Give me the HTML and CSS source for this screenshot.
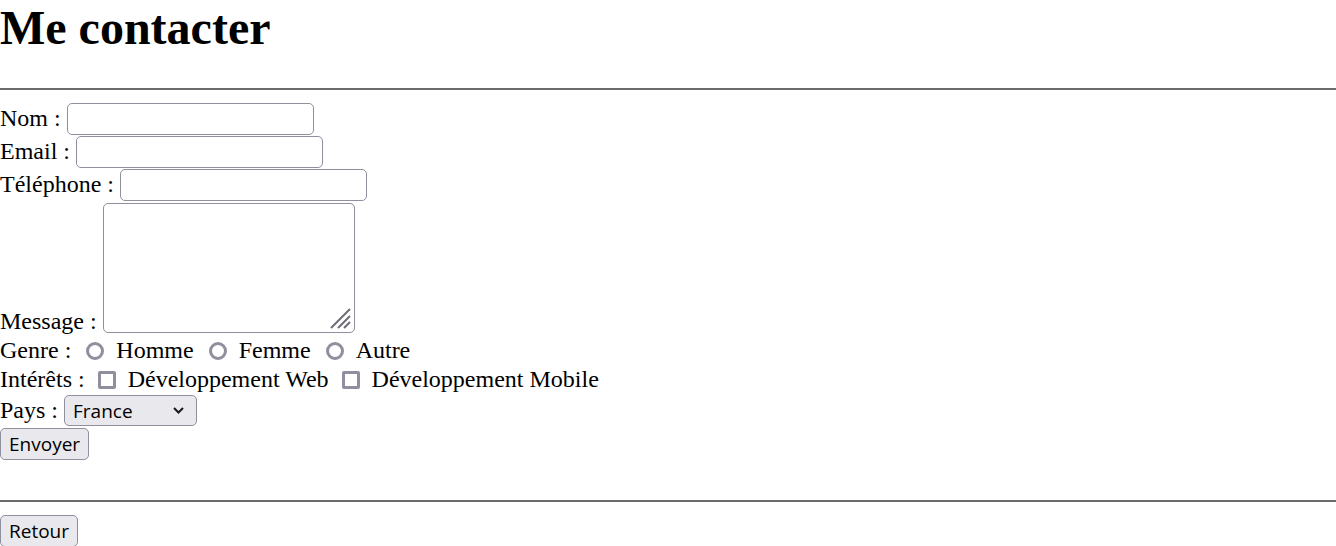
FILE: index.html
```html
<!DOCTYPE html>
<html lang="fr">
<head>
<meta charset="utf-8">
<title>Me contacter</title>
<link rel="stylesheet" href="styles.css">
</head>
<body class="page">
<h1 class="title">Me contacter</h1>
<hr class="rule">
<form class="contact">
  <label class="row"><span>Nom :</span><input class="field" type="text"></label>
  <label class="row"><span>Email :</span><input class="field" type="email"></label>
  <label class="row"><span>Téléphone :</span><input class="field" type="tel"></label>
  <label class="row row-area"><span>Message :</span>
    <span class="area-wrap">
      <textarea class="area"></textarea>
      <svg class="grip" width="22" height="22" viewBox="0 0 22 22"><path d="M21 2L2 21M21 9L9 21M21 15L15 21" fill="none" stroke="#6d6d78" stroke-width="2"/></svg>
    </span>
  </label>
  <div class="row row-choice">
    <span>Genre :</span>
    <input class="radio first" type="radio" name="genre" id="h"><label for="h">Homme</label>
    <input class="radio" type="radio" name="genre" id="f"><label for="f">Femme</label>
    <input class="radio" type="radio" name="genre" id="a"><label for="a">Autre</label>
  </div>
  <div class="row row-choice">
    <span>Intérêts :</span>
    <input class="check first" type="checkbox" id="web"><label for="web">Développement Web</label>
    <input class="check" type="checkbox" id="mob"><label for="mob">Développement Mobile</label>
  </div>
  <label class="row row-select"><span>Pays :</span>
    <span class="select-wrap">
      <select class="select"><option>France</option><option>Belgique</option><option>Suisse</option><option>Canada</option></select>
      <svg class="chevron" width="11" height="7" viewBox="0 0 11 7"><path d="M1 1l4.5 4.5L10 1" fill="none" stroke="#1a1a1a" stroke-width="2"/></svg>
    </span>
  </label>
  <div class="row row-btn"><button class="btn send" type="submit">Envoyer</button></div>
</form>
<div class="spacer"></div>
<hr class="rule rule-bottom">
<button class="btn back" type="button">Retour</button>
</body>
</html>
```

FILE: styles.css
```css
.page {
  margin: 0;
  font-family: "Liberation Serif", "Times New Roman", serif;
  font-size: 24px;
  color: #000;
  background: #fff;
  overflow: hidden;
}
.title {
  margin: 0 0 33px;
  font-size: 48px;
  font-weight: bold;
  line-height: 55px;
}
.rule {
  margin: 0 0 12px;
  border: 0;
  height: 2px;
  background: #6b6b6b;
}
.contact {
  margin: 0;
}
.row {
  display: flex;
  align-items: center;
  gap: 6px;
  height: 33px;
  line-height: 27.6px;
  white-space: nowrap;
}
.field {
  box-sizing: border-box;
  width: 247px;
  height: 32px;
  margin: 0;
  padding: 2px 6px;
  border: 1px solid #8f8f9d;
  border-radius: 5px;
  background: #fff;
  font-family: "Open Sans", "Noto Sans", sans-serif;
  font-size: 19px;
}
.row-area {
  align-items: flex-end;
  height: 135px;
}
.area-wrap {
  position: relative;
  display: inline-flex;
  margin: 0 0 3px;
}
.area {
  box-sizing: border-box;
  width: 252px;
  height: 130px;
  margin: 0;
  padding: 3px;
  border: 1px solid #8f8f9d;
  border-radius: 5px;
  background: #fff;
  resize: none;
  font-family: "Liberation Mono", monospace;
  font-size: 20px;
}
.grip {
  position: absolute;
  right: 4px;
  bottom: 4px;
  pointer-events: none;
}
.row-choice {
  gap: 0;
  height: 29px;
}
.radio, .check {
  -webkit-appearance: none;
  appearance: none;
  box-sizing: border-box;
  flex: none;
  border: 3px solid #8f8f9d;
  background: #fff;
}
.radio {
  width: 18px;
  height: 18px;
  border-radius: 50%;
  margin: 0 12px 0 15px;
}
.check {
  width: 18px;
  height: 18px;
  border-radius: 2px;
  margin: 0 12px 0 13px;
}
.row-select {
  height: 33px;
}
.select-wrap {
  position: relative;
  display: inline-flex;
}
.select {
  -webkit-appearance: none;
  appearance: none;
  box-sizing: border-box;
  width: 133px;
  height: 31px;
  margin: 0;
  padding: 0 8px;
  border: 1px solid #8f8f9d;
  border-radius: 5px;
  background: #e9e9ed;
  color: #000;
  font-family: "Open Sans", "Noto Sans", sans-serif;
  font-size: 19px;
}
.chevron {
  position: absolute;
  right: 13px;
  top: 12px;
  pointer-events: none;
}
.row-btn {
  height: 34px;
  align-items: flex-start;
  padding-top: 1px;
  box-sizing: border-box;
}
.btn {
  box-sizing: border-box;
  height: 32px;
  margin: 0;
  padding: 0 8px;
  border: 1px solid #8f8f9d;
  border-radius: 5px;
  background: #e9e9ed;
  color: #000;
  font-family: "Open Sans", "Noto Sans", sans-serif;
  font-size: 19px;
  line-height: 30px;
}
.spacer {
  height: 28px;
}
.rule-bottom {
  margin: 11px 0 13px;
}
.back {
  display: block;
}
```
